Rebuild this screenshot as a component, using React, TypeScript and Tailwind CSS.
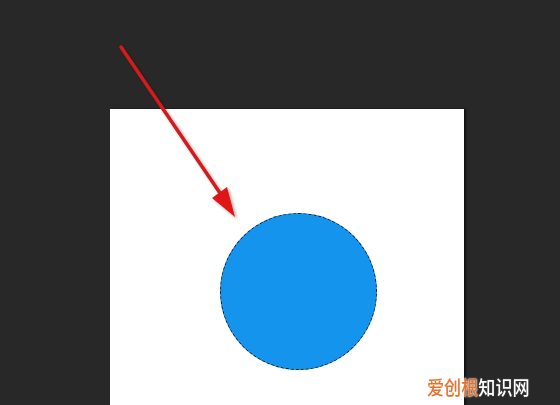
import React from "react";

export default function App() {
  return (
    <div className="relative w-[560px] h-[405px] overflow-hidden bg-[#282828] flex pl-[110px] pt-[109px]">
      <div className="w-[354px] h-full bg-white shadow-[2px_0_2px_rgba(0,0,0,0.6)] pl-[110px] pt-[104px]">
        <div className="w-[157px] h-[157px] rounded-full bg-[#1594ee] border-[1.5px] border-dashed border-[#0e1a28]" />
      </div>

      <svg className="absolute left-0 top-0" width="560" height="405" viewBox="0 0 560 405">
        <defs>
          <filter id="sh" x="-20%" y="-20%" width="140%" height="140%">
            <feGaussianBlur in="SourceAlpha" stdDeviation="1.5" />
            <feOffset dx="2" dy="2" result="b" />
            <feComponentTransfer>
              <feFuncA type="linear" slope="0.35" />
            </feComponentTransfer>
            <feMerge>
              <feMergeNode />
              <feMergeNode in="SourceGraphic" />
            </feMerge>
          </filter>
        </defs>
        <g filter="url(#sh)">
          <line x1="121" y1="47" x2="222" y2="196" stroke="#d41a1a" strokeWidth="3.5" strokeLinecap="round" />
          <polygon points="235,217 212,198 227,187" fill="#e01818" />
        </g>
      </svg>

      <div
        className="absolute left-[427px] top-[376px] text-[18px] leading-none font-medium origin-top-left scale-x-[0.95] scale-y-[1.1]"
        style={{ fontFamily: '"Noto Sans CJK SC", sans-serif' }}
      >
        <span className="text-[#e8702a] [text-shadow:0_0_2px_#fff,0_0_2px_#fff]">爱创根</span>
        <span className="text-white [text-shadow:0_0_2px_#444,0_0_2px_#444]">知识网</span>
      </div>
    </div>
  );
}
